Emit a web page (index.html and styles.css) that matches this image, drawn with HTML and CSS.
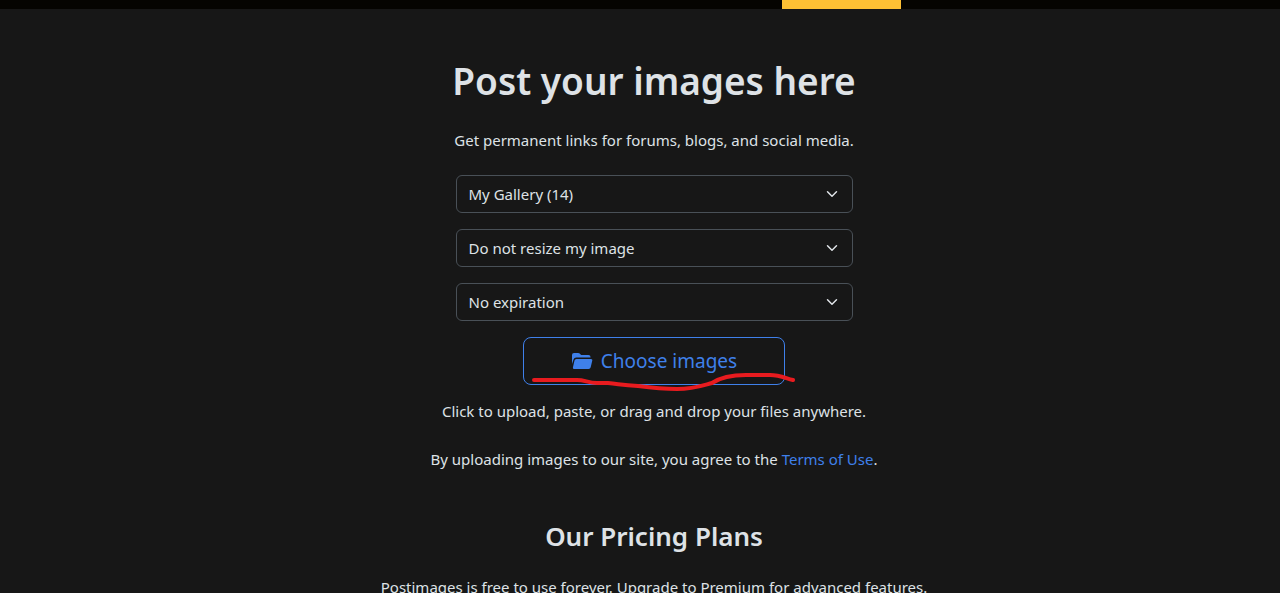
FILE: index.html
```html
<!DOCTYPE html>
<html lang="en">
<head>
    <meta charset="UTF-8">
    <meta name="viewport" content="width=device-width, initial-scale=1.0">
    <title>Postimages</title>
    <link rel="stylesheet" href="styles.css">
</head>
<body>
    <header class="topbar">
        <div class="topbar-inner">
            <a class="topbar-active" href="#" aria-label="Upload"></a>
        </div>
    </header>

    <main class="content">
        <h1>Post your images here</h1>
        <p class="lead">Get permanent links for forums, blogs, and social media.</p>

        <form class="upload-form">
            <select class="form-select" aria-label="Gallery">
                <option>My Gallery (14)</option>
            </select>
            <select class="form-select" aria-label="Resize">
                <option>Do not resize my image</option>
            </select>
            <select class="form-select" aria-label="Expiration">
                <option>No expiration</option>
            </select>
            <div class="upload-action">
                <button class="btn-upload" type="button">
                    <svg class="folder-icon" viewBox="0 0 22 18" aria-hidden="true">
                        <path d="M1 12V3Q1 1 3 1H7.200Q8 1 8.700 1.600L9.600 2.400Q10.200 3 11 3H17.500Q19.500 3 19.500 5V5.600H5.200Q3.300 5.600 2.500 7.400L1 12Z"/>
                        <path d="M5.400 7H20Q21.700 7 21.300 8.600L19.700 15.200Q19.300 17 17.600 17H3.300Q1.600 17 1.900 15.400L3.500 8.600Q3.900 7 5.400 7Z"/>
                    </svg>
                    Choose images
                </button>
                <svg class="underline-mark" viewBox="0 0 270 24" aria-hidden="true">
                    <path d="M3 10H46C54 10 57 13 66 13H77C88 14 91 15 107 16C122 18 130 19 146 19C163 19 173 15 181 13C190 7 203 5 215 5H239C249 5 254 8 262 10"/>
                </svg>
            </div>
        </form>

        <p class="hint">Click to upload, paste, or drag and drop your files anywhere.</p>
        <p class="terms">By uploading images to our site, you agree to the <a href="#">Terms of Use</a>.</p>

        <h2>Our Pricing Plans</h2>
        <p class="plans">Postimages is free to use forever. Upgrade to Premium for advanced features.</p>
    </main>
</body>
</html>
```

FILE: styles.css
```css
* {
    margin: 0;
    padding: 0;
    box-sizing: border-box;
}

html {
    height: 100%;
}

body {
    height: 100%;
    overflow: hidden;
    background: #171717;
    color: #dee2e6;
    font-family: "Noto Sans", "Open Sans", sans-serif;
    font-size: 15px;
    line-height: 24px;
}

.topbar {
    padding-left: 28px;
    background: #050401;
}

.topbar-inner {
    display: flex;
    justify-content: flex-end;
    max-width: 494px;
    margin: 0 auto;
}

.topbar-active {
    width: 119px;
    height: 9px;
    background: #fdc034;
}

.content {
    display: flex;
    flex-direction: column;
    align-items: center;
    padding: 48px 0 0 28px;
    text-align: center;
}

h1 {
    margin-bottom: 23px;
    font-size: 37px;
    font-weight: 600;
    line-height: 48px;
}

.lead {
    margin-bottom: 23px;
}

.upload-form {
    display: flex;
    flex-direction: column;
    gap: 16px;
    width: 100%;
    max-width: 397px;
    margin-bottom: 14px;
}

.form-select {
    width: 100%;
    height: 38px;
    padding: 0 36px 0 12px;
    appearance: none;
    border: 1px solid #495057;
    border-radius: 6px;
    background: #171717 url("data:image/svg+xml,%3Csvg xmlns='http://www.w3.org/2000/svg' viewBox='0 0 16 16'%3E%3Cpath fill='none' stroke='%23dee2e6' stroke-linecap='round' stroke-linejoin='round' stroke-width='2' d='m2 5 6 6 6-6'/%3E%3C/svg%3E") no-repeat right 14px center / 12px 12px;
    color: inherit;
    font: inherit;
}

.upload-action {
    position: relative;
    align-self: center;
}

.btn-upload {
    display: flex;
    align-items: center;
    justify-content: center;
    gap: 8px;
    height: 48px;
    padding: 0 47px;
    border: 1px solid #3f80ea;
    border-radius: 8px;
    background: transparent;
    color: #3f80ea;
    font: inherit;
    font-size: 19px;
    cursor: pointer;
}

.folder-icon {
    width: 22px;
    height: 18px;
    fill: currentColor;
}

/* hand-drawn stroke across the bottom of the button */
.underline-mark {
    position: absolute;
    left: 8px;
    bottom: -9px;
    width: 270px;
    height: 24px;
    fill: none;
    stroke: #e81b1f;
    stroke-width: 4;
    stroke-linecap: round;
    stroke-linejoin: round;
    pointer-events: none;
}

.hint {
    margin-bottom: 24px;
}

.terms {
    margin-bottom: 49px;
}

a {
    color: #3f80ea;
    text-decoration: none;
}

h2 {
    margin-bottom: 23px;
    font-size: 26px;
    font-weight: 600;
    line-height: 32px;
}
```
